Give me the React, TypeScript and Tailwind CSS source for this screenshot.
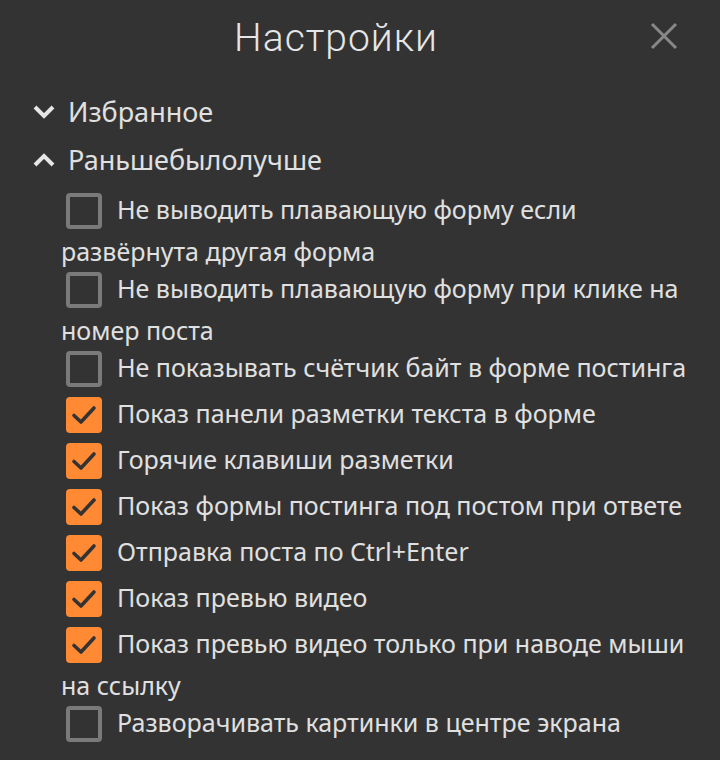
import React from "react";

const items: { text: string; checked: boolean }[] = [
  { text: "Не выводить плавающую форму если развёрнута другая форма", checked: false },
  { text: "Не выводить плавающую форму при клике на номер поста", checked: false },
  { text: "Не показывать счётчик байт в форме постинга", checked: false },
  { text: "Показ панели разметки текста в форме", checked: true },
  { text: "Горячие клавиши разметки", checked: true },
  { text: "Показ формы постинга под постом при ответе", checked: true },
  { text: "Отправка поста по Ctrl+Enter", checked: true },
  { text: "Показ превью видео", checked: true },
  { text: "Показ превью видео только при наводе мыши на ссылку", checked: true },
  { text: "Разворачивать картинки в центре экрана", checked: false },
];

function Box({ checked }: { checked: boolean }) {
  if (checked) {
    return (
      <span className="inline-flex align-middle w-[36px] h-[36px] ml-[5px] mr-[15px] mt-[4px] mb-[6px] rounded-[4px] bg-[#ff8a33] items-center justify-center">
        <svg width="26" height="22" viewBox="0 0 26 22" fill="none">
          <path d="M3 11.5 L10 18 L23 4" stroke="#333333" strokeWidth="3.6" strokeLinecap="round" strokeLinejoin="round" />
        </svg>
      </span>
    );
  }
  return (
    <span className="inline-block align-middle w-[36px] h-[36px] ml-[5px] mr-[15px] mt-[4px] mb-[6px] rounded-[4px] border-[4px] border-[#7a7a7a]" />
  );
}

export default function App() {
  return (
    <div className="w-[720px] h-[760px] bg-[#333333] text-[#e0e0e0] overflow-hidden" style={{ fontFamily: '"Noto Sans", sans-serif' }}>
      <div className="h-[76px] flex items-center pl-[22px] pr-[42px]">
        <h1 className="flex-1 text-center text-[39px] font-light text-[#e6e6e6] tracking-[1px]" style={{ fontFamily: 'Roboto, sans-serif' }}>Настройки</h1>
        <button className="w-[28px] h-[28px] mb-[5px]">
          <svg width="28" height="28" viewBox="0 0 28 28">
            <path d="M2 2 L26 26 M26 2 L2 26" stroke="#888888" strokeWidth="3" />
          </svg>
        </button>
      </div>
      <div className="pl-[33px] pt-[12px]">
        <div className="flex items-center h-[48px] gap-[13px] text-[27px]">
          <svg width="22" height="14" viewBox="0 0 22 14" fill="none">
            <path d="M2 2 L11 11 L20 2" stroke="#e6e6e6" strokeWidth="4" />
          </svg>
          <span>Избранное</span>
        </div>
        <div className="flex items-center h-[48px] gap-[13px] text-[27px]">
          <svg width="22" height="14" viewBox="0 0 22 14" fill="none">
            <path d="M2 12 L11 3 L20 12" stroke="#e6e6e6" strokeWidth="4" />
          </svg>
          <span>Раньшебылолучше</span>
        </div>
      </div>
      <div className="pl-[61px] pr-[26px] pt-[5px] text-[25px] leading-[33px]">
        {items.map((it, i) => (
          <div key={i}>
            <Box checked={it.checked} />
            {it.text}
          </div>
        ))}
      </div>
    </div>
  );
}
